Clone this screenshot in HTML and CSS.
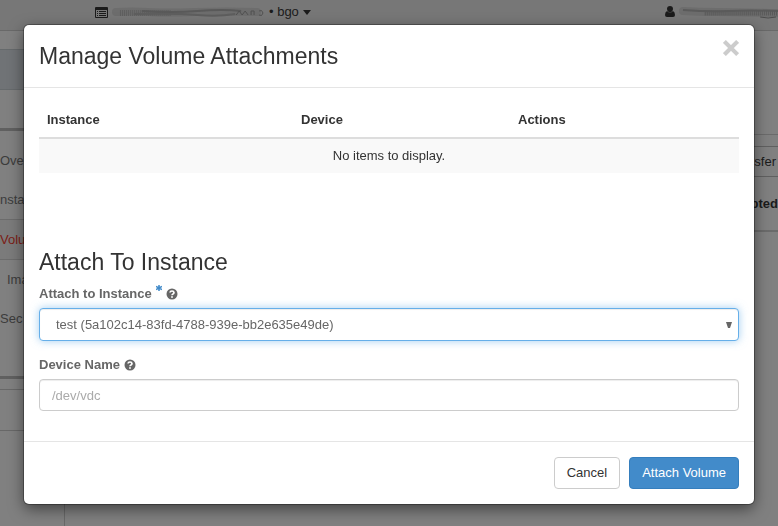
FILE: index.html
```html
<!DOCTYPE html>
<html lang="en">
<head>
<meta charset="utf-8">
<title>Manage Volume Attachments</title>
<meta name="viewport" content="width=device-width, initial-scale=1">
<link rel="stylesheet" href="styles.css">
</head>
<body>
<div class="page">
  <header class="topbar">
    <div class="project">
      <svg class="icon-list" viewBox="0 0 13 11" aria-hidden="true"><path fill="currentColor" fill-rule="evenodd" d="M1 0h11a1 1 0 0 1 1 1v9a1 1 0 0 1-1 1H1a1 1 0 0 1-1-1V1a1 1 0 0 1 1-1zm0 3v7h11V3zM2 4h1v1H2zm2 0h7v1H4zM2 6h1v1H2zm2 0h7v1H4zM2 8h1v1H2zm2 0h7v1H4z"/></svg>
      <svg class="smear" viewBox="0 0 154 14" preserveAspectRatio="none" aria-hidden="true">
        <path d="M4 7Q20 6 36 7T84 7T146 7" stroke="#6d6d6d" stroke-width="8" fill="none" stroke-linecap="round"/>
        <path d="M8 8H60" stroke="#5f5f5f" stroke-width="6" stroke-dasharray="1 1"/>
        <path d="M30 6Q60 8 86 6T130 6" stroke="#595959" stroke-width="2" fill="none"/>
        <path d="M22 9Q66 8 86 10T124 9" stroke="#5e5e5e" stroke-width="2" fill="none"/>
        <path d="M125 10l3-4 3 4 3-4 3 4M140 10V6h3v4M148 6q3-2 4 2q-1 4-4 2" stroke="#505050" fill="none"/>
      </svg>
      <span>• bgo</span>
      <svg class="icon-caret" viewBox="0 0 8 5" aria-hidden="true"><path fill="currentColor" d="M0 0h8L4 5z"/></svg>
    </div>
    <div class="user">
      <svg class="icon-user" viewBox="0 0 10 12" aria-hidden="true"><path fill="currentColor" d="M5 0a3 3 0 0 1 3 3 4 4 0 0 1-1 2.500q-2 1.500-4 0A4 4 0 0 1 2 3a3 3 0 0 1 3-3zM2 5q3 3 6 0 2 1 2 4 0 2-2 2H2q-2 0-2-2 0-3 2-4z"/></svg>
      <svg class="smear-user" viewBox="0 0 100 14" preserveAspectRatio="none" aria-hidden="true">
        <path d="M4 6Q20 7 38 7T100 8" stroke="#6d6d6d" stroke-width="8" fill="none" stroke-linecap="round"/>
        <path d="M26 8H100" stroke="#595959" stroke-width="5" stroke-dasharray="1 1"/>
        <path d="M4 5Q30 7 50 6T100 6" stroke="#5a5a5a" stroke-width="2" fill="none"/>
        <path d="M82 12Q90 14 98 12" stroke="#4c4c4c" fill="none"/>
      </svg>
    </div>
  </header>
  <div class="columns">
    <nav class="sidebar" aria-label="Project">
      <div class="group"></div>
      <div class="group-rule"></div>
      <a class="nav-item" href="#">Over</a>
      <a class="nav-item" href="#">nstan</a>
      <a class="nav-item active" href="#">Volu</a>
      <a class="nav-item indent" href="#">Ima</a>
      <a class="nav-item" href="#">Sec</a>
      <div class="group-end"></div>
      <div class="group-foot"></div>
    </nav>
    <main class="content">
      <div class="toolbar"><span class="toolbar-item">sfer</span></div>
      <div class="column-head">pted</div>
    </main>
  </div>
</div>

<div class="backdrop">
  <section class="modal" role="dialog" aria-modal="true" aria-labelledby="title">
    <header class="modal-header">
      <h1 id="title">Manage Volume Attachments</h1>
      <button class="close" type="button" aria-label="Close"><svg viewBox="0 0 14 14" aria-hidden="true"><path d="M2.500 2.500l9 9M11.500 2.500l-9 9" stroke="currentColor" stroke-width="3.600" stroke-linecap="square" stroke-linejoin="round"/></svg></button>
    </header>
    <form class="form">
      <div class="modal-body">
        <table class="attachments">
          <thead><tr><th class="col-instance">Instance</th><th class="col-device">Device</th><th>Actions</th></tr></thead>
          <tbody><tr><td colspan="3">No items to display.</td></tr></tbody>
        </table>
        <h2>Attach To Instance</h2>
        <div class="field">
          <div class="label-row">
            <label for="instance">Attach to Instance</label>
            <svg class="required" viewBox="0 0 6 6" aria-hidden="true"><path d="M3 0v6M0 1.500l6 3M6 1.500l-6 3" stroke="currentColor" stroke-width="1.500"/></svg>
            <svg class="help" viewBox="0 0 12 12" aria-hidden="true"><circle cx="6" cy="6" r="5.500" fill="currentColor"/><path d="M4 4.500Q4.200 3 6 3t2 1.600Q8 5.500 7 6T6 7.300" stroke="#fff" stroke-width="1.700" fill="none"/><path d="M5.100 8.200h1.800v1.600H5.100z" fill="#fff"/></svg>
          </div>
          <div class="select-wrap">
            <select id="instance" class="control focused"><option>test (5a102c14-83fd-4788-939e-bb2e635e49de)</option></select>
            <svg class="arrow" viewBox="0 0 6 6" aria-hidden="true"><path d="M0 0h6L4 6H2z" fill="currentColor"/></svg>
          </div>
        </div>
        <div class="field">
          <div class="label-row">
            <label for="device">Device Name</label>
            <svg class="help" viewBox="0 0 12 12" aria-hidden="true"><circle cx="6" cy="6" r="5.500" fill="currentColor"/><path d="M4 4.500Q4.200 3 6 3t2 1.600Q8 5.500 7 6T6 7.300" stroke="#fff" stroke-width="1.700" fill="none"/><path d="M5.100 8.200h1.800v1.600H5.100z" fill="#fff"/></svg>
          </div>
          <input id="device" class="control" type="text" placeholder="/dev/vdc">
        </div>
      </div>
      <footer class="modal-footer">
        <button class="btn" type="button">Cancel</button>
        <button class="btn primary" type="submit">Attach Volume</button>
      </footer>
    </form>
  </section>
</div>
</body>
</html>
```
FILE: styles.css
```css
* { box-sizing: border-box; }
body {
  margin: 0;
  font: 13px/18px "Liberation Sans", Arial, sans-serif;
  color: #333;
  overflow: hidden;
}
svg { display: block; flex: none; }
button, input, select { font: inherit; color: inherit; }

/* Page under the dialog */
.page { min-height: 100vh; display: flex; flex-direction: column; background: #808080; color: #1b1b1b; }
.topbar {
  height: 31px;
  display: flex;
  justify-content: space-between;
  padding: 3px 0 0 95px;
  background: #777;
  border-bottom: 1px solid #696969;
}
.project, .user { display: flex; align-items: center; height: 18px; gap: 4px; }
.icon-list { width: 13px; height: 11px; }
.smear { width: 153px; height: 14px; }
.icon-caret { width: 8px; height: 5px; }
.icon-user { width: 10px; height: 12px; }
.smear-user { width: 99px; height: 14px; }
.columns { flex: 1; display: flex; }
.sidebar {
  flex: none;
  width: 65px;
  padding-top: 18px;
  border-right: 1px solid #696969;
  display: flex;
  flex-direction: column;
}
.group { height: 41px; background: #707376; border: solid #666a6c; border-width: 1px 0; }
.group-rule { height: 41px; margin-bottom: 10px; border-bottom: 3px solid #606060; }
.nav-item {
  display: flex;
  align-items: center;
  height: 39px;
  color: #3c3c3c;
  text-decoration: none;
}
.active { height: 41px; color: #7c1d17; background: #7b7b7b; border: solid #6c6c6c; border-width: 1px 0; }
.indent { padding-left: 7px; }
.group-end { height: 41px; border-bottom: 3px solid #606060; }
.group-foot { height: 42px; margin-top: 10px; border: solid #686868; border-width: 1px 0; }
.content { flex: 1; padding-top: 103px; }
.toolbar { border-top: 1px solid #6b6b6b; padding-top: 11px; }
.toolbar-item, .column-head { display: flex; align-items: center; justify-content: flex-end; }
.toolbar-item { height: 31px; padding-right: 2px; border: solid #606060; border-width: 1px 0; }
.column-head { height: 55px; font-weight: bold; border-bottom: 2px solid #6b6b6b; }

/* Dialog */
.backdrop { position: fixed; inset: 0; padding: 25px 24px; overflow: hidden; }
.modal {
  background: #fff;
  border-radius: 5px;
  box-shadow: 0 0 0 1px rgba(0, 0, 0, .3), 0 5px 15px rgba(0, 0, 0, .5);
}
.modal-header {
  display: flex;
  justify-content: space-between;
  align-items: flex-start;
  padding: 15px 15px 14px;
  border-bottom: 1px solid #e5e5e5;
}
h1, h2 { margin: 0; font-size: 23px; line-height: 33px; font-weight: normal; }
.close { padding: 0; border: 0; background: none; color: #ccc; }
.close svg { width: 16px; height: 16px; }
.modal-body { padding: 15px 15px 30px; }
.attachments { width: 100%; border-collapse: collapse; margin-bottom: 73px; }
.attachments th { text-align: left; padding: 8px; height: 35px; border-bottom: 2px solid #ddd; }
.attachments td { text-align: center; padding: 8px; height: 35px; background: #f9f9f9; }
.col-instance { width: 254px; }
.col-device { width: 217px; }
h2 { margin-bottom: 6px; }
.label-row { display: flex; align-items: center; gap: 4px; height: 18px; margin-bottom: 5px; color: #666; font-weight: bold; }
.required { width: 6px; height: 6px; color: #428bca; align-self: flex-start; }
.help { width: 12px; height: 12px; }
.field + .field { margin-top: 15px; }
.select-wrap { display: grid; align-items: center; color: #666; }
.select-wrap > * { grid-area: 1 / 1; }
.arrow { width: 6px; height: 6px; justify-self: end; margin-right: 7px; pointer-events: none; }
.control {
  display: block;
  width: 100%;
  height: 32px;
  padding: 6px 12px;
  color: #666;
  background: #fff;
  border: 1px solid #ccc;
  border-radius: 4px;
  box-shadow: inset 0 1px 1px rgba(0, 0, 0, .075);
  appearance: none;
}
select.control { height: 33px; padding-left: 16px; }
.control::placeholder { color: #aaa; opacity: 1; }
.focused { border-color: #66afe9; box-shadow: inset 0 1px 1px rgba(0, 0, 0, .075), 0 0 8px rgba(102, 175, 233, .6); }
.modal-footer {
  display: flex;
  justify-content: flex-end;
  gap: 9px;
  padding: 15px;
  border-top: 1px solid #e5e5e5;
}
.btn { height: 32px; padding: 0 12px; background: #fff; border: 1px solid #ccc; border-radius: 4px; }
.primary { background: #428bca; border-color: #357ebd; color: #fff; }
```
